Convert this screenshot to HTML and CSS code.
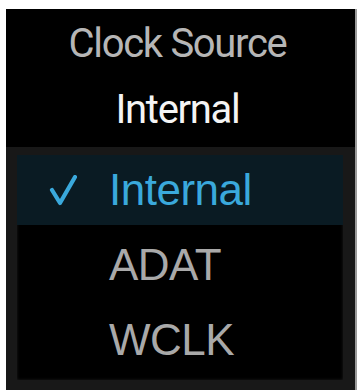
FILE: index.html
```html
<!DOCTYPE html>
<html>
<head>
<meta charset="utf-8">
<link rel="stylesheet" href="styles.css">
</head>
<body>
<div class="screen">
  <header class="head">
    <div class="title">Clock Source</div>
    <div class="value">Internal</div>
  </header>
  <ul class="list">
    <li class="item selected">
      <span class="mark"><svg class="check" viewBox="0 0 28 32" width="28" height="32"><path d="M3 15 L11 28 L26 2" fill="none" stroke="#3aa9dc" stroke-width="4.2" stroke-linecap="round" stroke-linejoin="round"/></svg></span>
      <span class="label">Internal</span>
    </li>
    <li class="item"><span class="mark"></span><span class="label">ADAT</span></li>
    <li class="item"><span class="mark"></span><span class="label">WCLK</span></li>
  </ul>
</div>
</body>
</html>
```

FILE: styles.css
```css
html, body {
  margin: 0;
  padding: 0;
  background: #ffffff;
}

.screen {
  margin: 9px 0 0 6px;
  width: 349px;
  height: 381px;
  background: #000000;
  border-right: 2px solid #9a9a9a;
  display: flex;
  flex-direction: column;
  box-sizing: content-box;
}

.head {
  padding: 13px 6px 0 0;
  margin-bottom: 15px;
  text-align: center;
  font-family: Roboto, "Noto Sans", sans-serif;
  font-size: 40px;
  letter-spacing: -1.3px;
  line-height: 44px;
}

.title {
  color: #b6b6b6;
}

.value {
  color: #f4f4f4;
  margin-top: 22px;
}

.list {
  list-style: none;
  margin: 0;
  padding: 0 0 5px 0;
  border-style: solid;
  border-color: #181818;
  border-width: 8px 12px 10px 11px;
  box-shadow: inset 0 0 3px rgba(60, 60, 60, 0.5);
  display: flex;
  flex-direction: column;
  gap: 5px;
  font-family: "Liberation Sans", Arial, sans-serif;
  font-size: 44px;
  letter-spacing: -0.5px;
}

.item {
  height: 70px;
  display: grid;
  grid-template-columns: 92px 1fr;
  align-items: center;
  color: #a9a9a9;
}

.item.selected {
  background: #0a1b23;
  color: #3aa9dc;
}

.mark {
  display: flex;
  align-items: center;
  padding-left: 32px;
}

.check {
  display: block;
  margin-top: 2px;
}

.label {
  line-height: 50px;
}
```
